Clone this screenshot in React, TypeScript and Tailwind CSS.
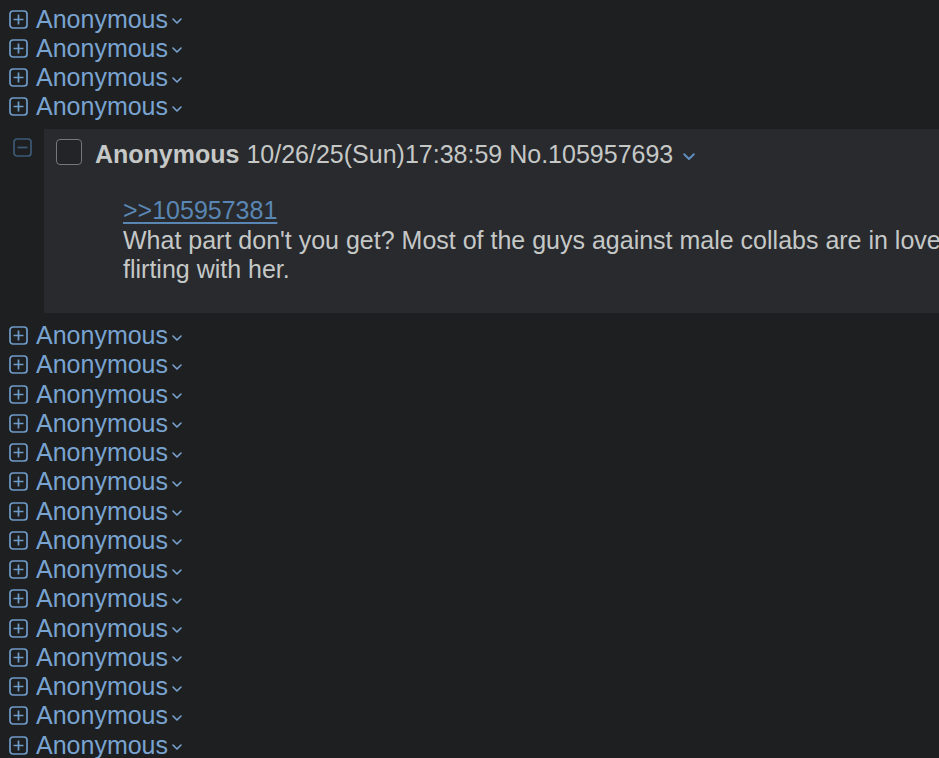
import React from "react";

const topStubs = 4;
const bottomStubs = 15;

const PlusBox = () => (
  <svg width="19" height="19" viewBox="0 0 19 19" fill="none" className="shrink-0">
    <rect x="1" y="1" width="17" height="17" rx="3" stroke="#6f9bc8" strokeWidth="1.7" />
    <path d="M4.5 9.5h10M9.5 4.5v10" stroke="#6f9bc8" strokeWidth="1.7" />
  </svg>
);

const MinusBox = () => (
  <svg width="19" height="19" viewBox="0 0 19 19" fill="none" className="shrink-0">
    <rect x="1" y="1" width="17" height="17" rx="3" stroke="#3d5a76" strokeWidth="1.7" />
    <path d="M4.5 9.5h10" stroke="#3d5a76" strokeWidth="1.7" />
  </svg>
);

const Chevron = ({ w = 10, color = "#79a3d0" }: { w?: number; color?: string }) => (
  <svg width={w} height={w * 0.6} viewBox="0 0 10 6" fill="none" className="shrink-0">
    <path d="M1 1l4 4 4-4" stroke={color} strokeWidth="1.6" strokeLinecap="round" strokeLinejoin="round" />
  </svg>
);

const Stub = () => (
  <div className="flex items-center h-[29.25px] pl-[9px]">
    <PlusBox />
    <span className="ml-[8px] text-[#79a3d0]">Anonymous</span>
    <span className="ml-[4px] mt-[4px] flex">
      <Chevron />
    </span>
  </div>
);

const Post = () => (
  <div className="flex mt-[7.5px] mb-[8px]">
    <div className="w-[44px] shrink-0 pl-[13px] pt-[9px]">
      <MinusBox />
    </div>
    <div className="w-[1150px] shrink-0 bg-[#282a2e] h-[184px] pt-[11px]">
      <div className="flex items-center h-[29.25px] pl-[12px] whitespace-nowrap">
        <div className="w-[26px] h-[26px] mb-[5px] rounded-[4px] border-[1.5px] border-[#76787b] bg-[#222427]" />
        <span className="ml-[13px] font-bold">Anonymous</span>
        <span className="ml-[7px]">10/26/25(Sun)17:38:59</span>
        <span className="ml-[7px]">No.105957693</span>
        <span className="ml-[10px] mt-[4px] flex">
          <Chevron w={12} color="#5f8ebf" />
        </span>
      </div>
      <div className="mt-[27px] pl-[79px]">
        <a className="text-[#5a86b3] underline underline-offset-[3px] decoration-[2px]">&gt;&gt;105957381</a>
        <br />
        What part don't you get? Most of the guys against male collabs are in love with her and hate any
        <br />
        flirting with her.
      </div>
    </div>
  </div>
);

export default function App() {
  return (
    <div className="w-full min-h-screen overflow-hidden bg-[#1d1f21] text-[#c5c8c6] text-[25px] leading-[29.25px] font-['Liberation_Sans',Arial,sans-serif] pt-[4.5px]">
      {Array.from({ length: topStubs }).map((_, i) => (
        <Stub key={`t${i}`} />
      ))}
      <Post />
      {Array.from({ length: bottomStubs }).map((_, i) => (
        <Stub key={`b${i}`} />
      ))}
    </div>
  );
}
